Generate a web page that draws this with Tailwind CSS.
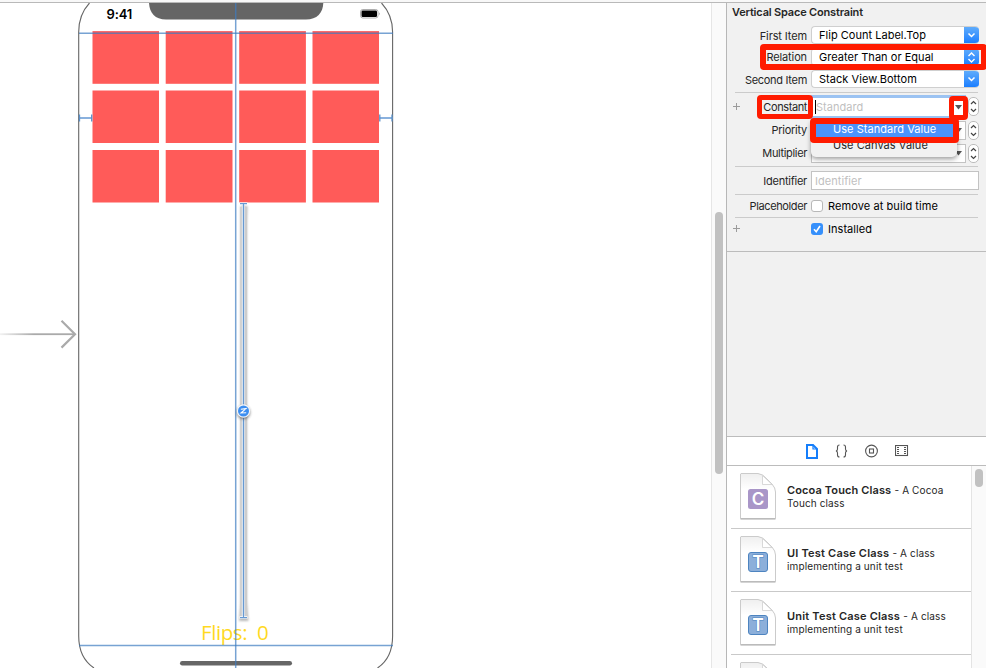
<!DOCTYPE html>
<html lang="en">
<head>
<meta charset="utf-8">
<title>Vertical Space Constraint</title>
<script src="https://cdn.jsdelivr.net/npm/@tailwindcss/browser@4"></script>
</head>
<body class="w-[986px] h-[668px] overflow-hidden bg-white text-[#262626] font-[Inter,'Liberation_Sans',sans-serif] text-[11px]">
<div class="flex flex-col w-[986px] h-[668px] overflow-hidden">
<div class="h-[3px] shrink-0 bg-[#f8f8f8] border-b border-[#b9b9b9]"></div>
<div class="flex h-[665px]">

<!-- Canvas -->
<main class="relative w-[711px] h-full overflow-hidden bg-white">
  <svg class="absolute left-0 top-0" width="711" height="665" viewBox="0 3 711 665" fill="none">
    <defs>
      <linearGradient id="fade" x1="0" x2="1"><stop offset="0" stop-color="#aaa" stop-opacity=".15"/><stop offset=".45" stop-color="#aaa"/></linearGradient>
    </defs>
    <path d="M89.500 3C82 11 78.700 19 78.700 32V636C78.700 651 83.500 661 94 668M381.500 3C389 11 392.600 19 392.600 32V636C392.600 651 388 661 377.500 668" stroke="#666" stroke-width="1.100"/>
    <path d="M149 3C149.500 13 155 19.500 166 19.500H306C317 19.500 323 13 323.300 3Z" fill="#656565"/>
    <rect x="360.500" y="9.500" width="17.500" height="8.500" rx="2.300" stroke="#999" stroke-width=".8"/>
    <rect x="361.500" y="10.500" width="15.500" height="6.500" rx="1.200" fill="#000"/>
    <path d="M379 12.300q1.300 1.400 0 3z" fill="#888"/>
    <rect x="0" y="333.300" width="75" height="1.800" fill="url(#fade)"/>
    <path d="M61.500 320.800L75 334.200L61.500 347.600" stroke="#aaa" stroke-width="2.200"/>
    <rect x="180" y="661" width="112" height="4.500" rx="2.200" fill="#666"/>
    <g fill="#ff5b59">
      <rect x="92.500" y="31.100" width="66.500" height="52.700"/><rect x="165.700" y="31.100" width="66.800" height="52.700"/><rect x="239.200" y="31.100" width="66.700" height="52.700"/><rect x="312.500" y="31.100" width="66.500" height="52.700"/>
      <rect x="92.500" y="90.500" width="66.500" height="52.500"/><rect x="165.700" y="90.500" width="66.800" height="52.500"/><rect x="239.200" y="90.500" width="66.700" height="52.500"/><rect x="312.500" y="90.500" width="66.500" height="52.500"/>
      <rect x="92.500" y="150" width="66.500" height="52.500"/><rect x="165.700" y="150" width="66.800" height="52.500"/><rect x="239.200" y="150" width="66.700" height="52.500"/><rect x="312.500" y="150" width="66.500" height="52.500"/>
    </g>
  </svg>
  <div class="absolute left-[106.500px] top-[4px] text-[13px] leading-[14px] font-semibold tracking-[-0.150px] text-black">9:41</div>
  <div class="absolute left-[201px] top-[616px] text-[20.500px] leading-[26px] text-[#ffd91f] tracking-[-0.400px] whitespace-pre font-['Open_Sans',sans-serif]">Flips:  0</div>
  <svg class="absolute left-0 top-0" width="711" height="665" viewBox="0 3 711 665" fill="none">
    <defs><filter id="soft" x="-200%" width="500%"><feGaussianBlur stdDeviation="1.300"/></filter>
    <filter id="glow" x="-50%" y="-50%" width="200%" height="200%"><feGaussianBlur stdDeviation="1.500"/></filter></defs>
    <path d="M235.700 3V668" stroke="#3d7cc0" stroke-opacity=".7" stroke-width="1.500"/>
    <path d="M79 33.200H393M79 645.600H393" stroke="#3d7cc0" stroke-opacity=".7" stroke-width="1.500"/>
    <path d="M79.500 118H92M379.500 118H392.500" stroke="#8ab1de" stroke-width="1.800"/>
    <path d="M79.500 114.500V121.500M91.700 114.500V121.500M379.800 114.500V121.500M392 114.500V121.500" stroke="#5b91c9" stroke-width="1.300"/>
    <path d="M240.500 206H247.500L247 222V602L248.500 621H239L240.500 602Z" fill="#777" opacity=".5" filter="url(#soft)"/>
    <rect x="240.300" y="207" width="6.700" height="410" fill="#cdcdcd"/>
    <rect x="241.800" y="205" width="3" height="413" fill="#e4e9ef"/>
    <path d="M239.500 203.700H247.500M239.500 617.500H247.500" stroke="#fff" stroke-width="2.600"/>
    <path d="M243.500 203.700V617.700M240 203.700H247M240 617.700H247" stroke="#6699d2" stroke-width="1.200"/>
    <circle cx="243.500" cy="412.500" r="6.500" fill="#333" opacity=".65" filter="url(#glow)"/>
    <circle cx="243.500" cy="411" r="6.700" fill="#f4f6f9"/>
    <circle cx="243.500" cy="411" r="5.500" fill="#3c8ef0"/>
    <path d="M240.800 409.200L246 408.600L241 413L246.200 412.800" stroke="#fff" stroke-width="1.100"/>
  </svg>
</main>

<!-- Canvas scroller -->
<div class="w-[15px] h-full bg-[#fafafa] border-l border-[#e6e6e6] pt-[209px] pl-[3px]"><div class="w-[8px] h-[262px] rounded-full bg-[#c1c1c1]"></div></div>

<!-- Utilities -->
<aside class="relative w-[260px] h-full flex flex-col border-l border-[#b7b7b7] bg-[#f1f1f1]">
  <section class="h-[249px] shrink-0 border-b border-[#bcbcbc] whitespace-nowrap tracking-[-0.120px]">
    <h1 class="h-[21px] pl-[5px] leading-[19px] font-semibold tracking-[-0.180px]">Vertical Space Constraint</h1>
    <div class="h-[22px] flex items-center"><span class="w-[80px] text-right pt-[2px]">First Item</span>
      <div class="ml-[4px] w-[168px] h-[18px] flex rounded-[4px] overflow-hidden border border-[#cfcfcf] border-r-0 bg-white"><span class="flex-1 pl-[7px] leading-[16px] tracking-[0.020px] text-black">Flip Count Label.Top</span><span class="-my-px w-[15px] bg-linear-to-b from-[#62aefb] to-[#117bff] flex items-center justify-center"><svg width="9" height="6" fill="none" stroke="#fff" stroke-width="1.500"><path d="M1.500 1.500L4.500 4.500L7.500 1.500"/></svg></span></div></div>
    <div class="h-[22px] flex items-center"><span class="w-[80px] text-right">Relation</span>
      <div class="ml-[4px] w-[168px] h-[18px] flex rounded-[4px] overflow-hidden border border-[#cfcfcf] border-r-0 bg-white"><span class="flex-1 pl-[7px] leading-[16px] tracking-[0.030px] text-black">Greater Than or Equal</span><span class="-my-px w-[15px] bg-linear-to-b from-[#62aefb] to-[#117bff] flex items-center justify-center"><svg width="9" height="11" fill="none" stroke="#fff" stroke-width="1.400"><path d="M1.500 4L4.500 1L7.500 4M1.500 7L4.500 10L7.500 7"/></svg></span></div></div>
    <div class="h-[22px] flex items-center"><span class="w-[80px] text-right pt-[2px] tracking-[-0.300px]">Second Item</span>
      <div class="ml-[4px] w-[168px] h-[18px] flex rounded-[4px] overflow-hidden border border-[#cfcfcf] border-r-0 bg-white"><span class="flex-1 pl-[7px] leading-[16px] tracking-[0.050px] text-black">Stack View.Bottom</span><span class="-my-px w-[15px] bg-linear-to-b from-[#62aefb] to-[#117bff] flex items-center justify-center"><svg width="9" height="6" fill="none" stroke="#fff" stroke-width="1.500"><path d="M1.500 1.500L4.500 4.500L7.500 1.500"/></svg></span></div></div>
    <div class="mx-[8px] mt-[2px] h-px bg-[#cbcbcb]"></div>
    <div class="h-[28px] flex items-center"><svg class="ml-[6px]" width="8" height="8" stroke="#9b9b9b"><path d="M0 3.500H7M3.500 0V7"/></svg><span class="w-[66px] text-right tracking-[-0.400px]">Constant</span>
      <div class="ml-[4px] w-[155px] h-[24px] bg-white border-y-[3px] border-[#9cc3f2] flex items-center pl-[4px] text-[#bfbfbf]"><i class="w-px h-[14px] bg-black"></i><span class="flex-1 tracking-[0.020px]">Standard</span><svg class="mr-[4px]" width="7" height="5"><path d="M0 0H7L3.500 4.500Z" fill="#555"/></svg></div>
      <svg class="ml-[2px]" width="11" height="20" fill="none"><rect x=".5" y=".5" width="10" height="18" rx="4.500" fill="#fff" stroke="#bcbcbc"/><path d="M3 7L5.500 4.500L8 7M3 12L5.500 14.500L8 12" stroke="#444" stroke-width="1.200"/></svg></div>
    <div class="h-[23px] pb-[4px] flex items-center"><span class="w-[80px] text-right tracking-[-0.250px]">Priority</span>
      <div class="ml-[4px] w-[155px] h-[19px] bg-white border border-[#c3c3c3] flex items-center justify-end"><svg class="mr-[3px]" width="7" height="5"><path d="M0 0H7L3.500 4.500Z" fill="#555"/></svg></div>
      <svg class="ml-[2px]" width="11" height="19" fill="none"><rect x=".5" y=".5" width="10" height="18" rx="4.500" fill="#fff" stroke="#bcbcbc"/><path d="M3 7L5.500 4.500L8 7M3 12L5.500 14.500L8 12" stroke="#444" stroke-width="1.200"/></svg></div>
    <div class="h-[22px] pb-[3px] flex items-center"><span class="w-[80px] text-right tracking-[-0.350px]">Multiplier</span>
      <div class="ml-[4px] w-[155px] h-[19px] bg-white border border-[#c3c3c3] flex items-center justify-end"><svg class="mr-[3px]" width="7" height="5"><path d="M0 0H7L3.500 4.500Z" fill="#555"/></svg></div>
      <svg class="ml-[2px]" width="11" height="19" fill="none"><rect x=".5" y=".5" width="10" height="18" rx="4.500" fill="#fff" stroke="#bcbcbc"/><path d="M3 7L5.500 4.500L8 7M3 12L5.500 14.500L8 12" stroke="#444" stroke-width="1.200"/></svg></div>
    <div class="mx-[8px] h-px bg-[#cbcbcb]"></div>
    <div class="h-[27px] flex items-center"><span class="w-[80px] text-right pt-[2px] tracking-[-0.250px]">Identifier</span><div class="ml-[4px] w-[168px] h-[19px] bg-white border border-[#c3c3c3] pl-[3px] leading-[19px] text-[#bfbfbf] tracking-[0.050px]">Identifier</div></div>
    <div class="mx-[8px] h-px bg-[#cbcbcb]"></div>
    <div class="h-[22px] flex items-center"><span class="w-[80px] text-right tracking-[-0.380px]">Placeholder</span><span class="ml-[4px] w-[12px] h-[12px] rounded-[3px] bg-white border border-[#b8b8b8]"></span><span class="ml-[5px] tracking-[0.080px] text-black">Remove at build time</span></div>
    <div class="mx-[8px] h-px bg-[#cbcbcb]"></div>
    <div class="h-[22px] flex items-center"><svg class="ml-[6px]" width="8" height="8" stroke="#9b9b9b"><path d="M0 3.500H7M3.500 0V7"/></svg><svg class="ml-[70px]" width="12" height="12"><rect width="12" height="12" rx="3" fill="#3690fb"/><path d="M3 6.300L5.200 8.800L9 3" fill="none" stroke="#fff" stroke-width="1.600"/></svg><span class="ml-[5px] tracking-[0.050px] text-black">Installed</span></div>
  </section>

  <div class="h-[184px] shrink-0"></div>
  <nav class="h-[30px] shrink-0 bg-white border-y border-[#bcbcbc] flex items-center pl-[79px] gap-[16px]">
    <svg width="12" height="15" fill="none" stroke="#157efb" stroke-width="2"><path d="M1 1H7L11 5V14H1Z"/><path d="M7 1V5H11" stroke-width="1.200"/></svg>
    <svg class="ml-[1px]" width="14" height="14" fill="none" stroke="#555" stroke-width="1.100"><path d="M4.500 1Q2.500 1 2.500 3V5Q2.500 6.700 1 7Q2.500 7.300 2.500 9V11Q2.500 13 4.500 13M8.500 1Q10.500 1 10.500 3V5Q10.500 6.700 12 7Q10.500 7.300 10.500 9V11Q10.500 13 8.500 13"/></svg>
    <svg width="14" height="14" fill="none" stroke="#555" stroke-width="1.100"><circle cx="6.500" cy="7" r="5.900"/><rect x="4.500" y="5" width="4" height="4"/></svg>
    <svg width="14" height="12" fill="none" stroke="#555"><rect x=".5" y=".5" width="12" height="10" stroke-width="1.100"/><path d="M3 2V11M10 2V11" stroke-width="2" stroke-dasharray="1 1"/></svg>
  </nav>
  <div class="h-[202px] flex bg-white overflow-hidden tracking-[0.120px] leading-[13px]">
    <div class="w-[240px] ml-[4px] shrink-0">
      <article class="h-[63px] border-b border-[#c9c9c9] flex"><svg class="ml-[8px] mt-[6px] shrink-0" width="38" height="49" fill="none"><defs><linearGradient id="paper" x1="0" y1="0" x2="0" y2="1"><stop offset="0" stop-color="#efefef"/><stop offset=".35" stop-color="#fff"/></linearGradient></defs><path d="M2 1.500H19Q24 2 28 7L33 12Q36.500 16 36.500 20V46.500H1.500V2Z" fill="url(#paper)" stroke="#cbcbcb"/><path d="M1.500 47H36.500" stroke="#aaa"/><path d="M23.500 3.500V12.500H33Z" fill="#fff" stroke="#cfcfcf" stroke-width=".8"/><rect x="9" y="17" width="20" height="20" rx="2.500" fill="#a996c8"/><text x="19" y="33" text-anchor="middle" font-family="Inter" font-size="17" font-weight="600" fill="#fff" letter-spacing="0">C</text></svg><p class="ml-[10px] mt-[18px]"><b class="font-semibold tracking-[0.120px]">Cocoa Touch Class</b> <span class="text-[10px]">- A Cocoa<br>Touch class</span></p></article>
      <article class="h-[63px] border-b border-[#c9c9c9] flex"><svg class="ml-[8px] mt-[6px] shrink-0" width="38" height="49" fill="none"><path d="M2 1.500H19Q24 2 28 7L33 12Q36.500 16 36.500 20V46.500H1.500V2Z" fill="url(#paper)" stroke="#cbcbcb"/><path d="M1.500 47H36.500" stroke="#aaa"/><path d="M23.500 3.500V12.500H33Z" fill="#fff" stroke="#cfcfcf" stroke-width=".8"/><rect x="9.500" y="17.500" width="19" height="19" rx="2.500" fill="#8cafda" stroke="#4d84c0"/><text x="19" y="33" text-anchor="middle" font-family="Inter" font-size="17.500" font-weight="600" fill="#fff" stroke="#4d84c0" stroke-width="1.200" paint-order="stroke" letter-spacing="0">T</text></svg><p class="ml-[10px] mt-[18px]"><b class="font-semibold tracking-[0.200px]">UI Test Case Class</b> <span class="text-[10px]">- A class<br>implementing a unit test</span></p></article>
      <article class="h-[63px] border-b border-[#c9c9c9] flex"><svg class="ml-[8px] mt-[6px] shrink-0" width="38" height="49" fill="none"><path d="M2 1.500H19Q24 2 28 7L33 12Q36.500 16 36.500 20V46.500H1.500V2Z" fill="url(#paper)" stroke="#cbcbcb"/><path d="M1.500 47H36.500" stroke="#aaa"/><path d="M23.500 3.500V12.500H33Z" fill="#fff" stroke="#cfcfcf" stroke-width=".8"/><rect x="9.500" y="17.500" width="19" height="19" rx="2.500" fill="#8cafda" stroke="#4d84c0"/><text x="19" y="33" text-anchor="middle" font-family="Inter" font-size="17.500" font-weight="600" fill="#fff" stroke="#4d84c0" stroke-width="1.200" paint-order="stroke" letter-spacing="0">T</text></svg><p class="ml-[10px] mt-[18px]"><b class="font-semibold tracking-[0.200px]">Unit Test Case Class</b> <span class="text-[10px]">- A class<br>implementing a unit test</span></p></article>
      <article class="h-[63px]"><svg class="ml-[8px] mt-[6px] shrink-0" width="38" height="49" fill="none"><path d="M2 1.500H19Q24 2 28 7L33 12Q36.500 16 36.500 20V46.500H1.500V2Z" fill="url(#paper)" stroke="#cbcbcb"/><path d="M23.500 3.500V12.500H33Z" fill="#fff" stroke="#cfcfcf" stroke-width=".8"/></svg></article>
    </div>
    <div class="w-[15px] bg-[#fafafa] border-l border-[#e4e4e4] pt-[3px] pl-[3px]"><div class="w-[8px] h-[18px] rounded-full bg-[#c1c1c1]"></div></div>
  </div>

  <!-- Open menu and annotations -->
  <div class="absolute left-[84px] top-[118px] w-[146px] h-[36px] rounded-b-[5px] bg-[#f1f1f1] shadow-[0_2px_5px_rgba(0,0,0,.4)] overflow-hidden">
    <div class="absolute left-[22px] top-[17px] leading-[14px] tracking-[0.050px]">Use Canvas Value</div>
    <div class="absolute left-0 top-0 w-[146px] h-[17px] pl-[22px] bg-[#4b93fb] text-white leading-[17px] tracking-[0.050px]">Use Standard Value</div>
  </div>
  <div class="absolute left-[83px] top-[115px] w-[149px] h-[25px] border-[6px] border-[#ff1b00] rounded-[4px]"></div>
  <div class="absolute left-[33px] top-[41px] w-[227px] h-[26px] border-[6px] border-[#ff1b00] rounded-[4px]"></div>
  <div class="absolute left-[30px] top-[92px] w-[56px] h-[24px] border-[5px] border-[#ff1b00] rounded-[4px]"></div>
  <div class="absolute left-[222px] top-[93px] w-[19px] h-[24px] border-[5px] border-[#ff1b00] rounded-[4px]"></div>
</aside>
</div>
</div>
</body>
</html>
